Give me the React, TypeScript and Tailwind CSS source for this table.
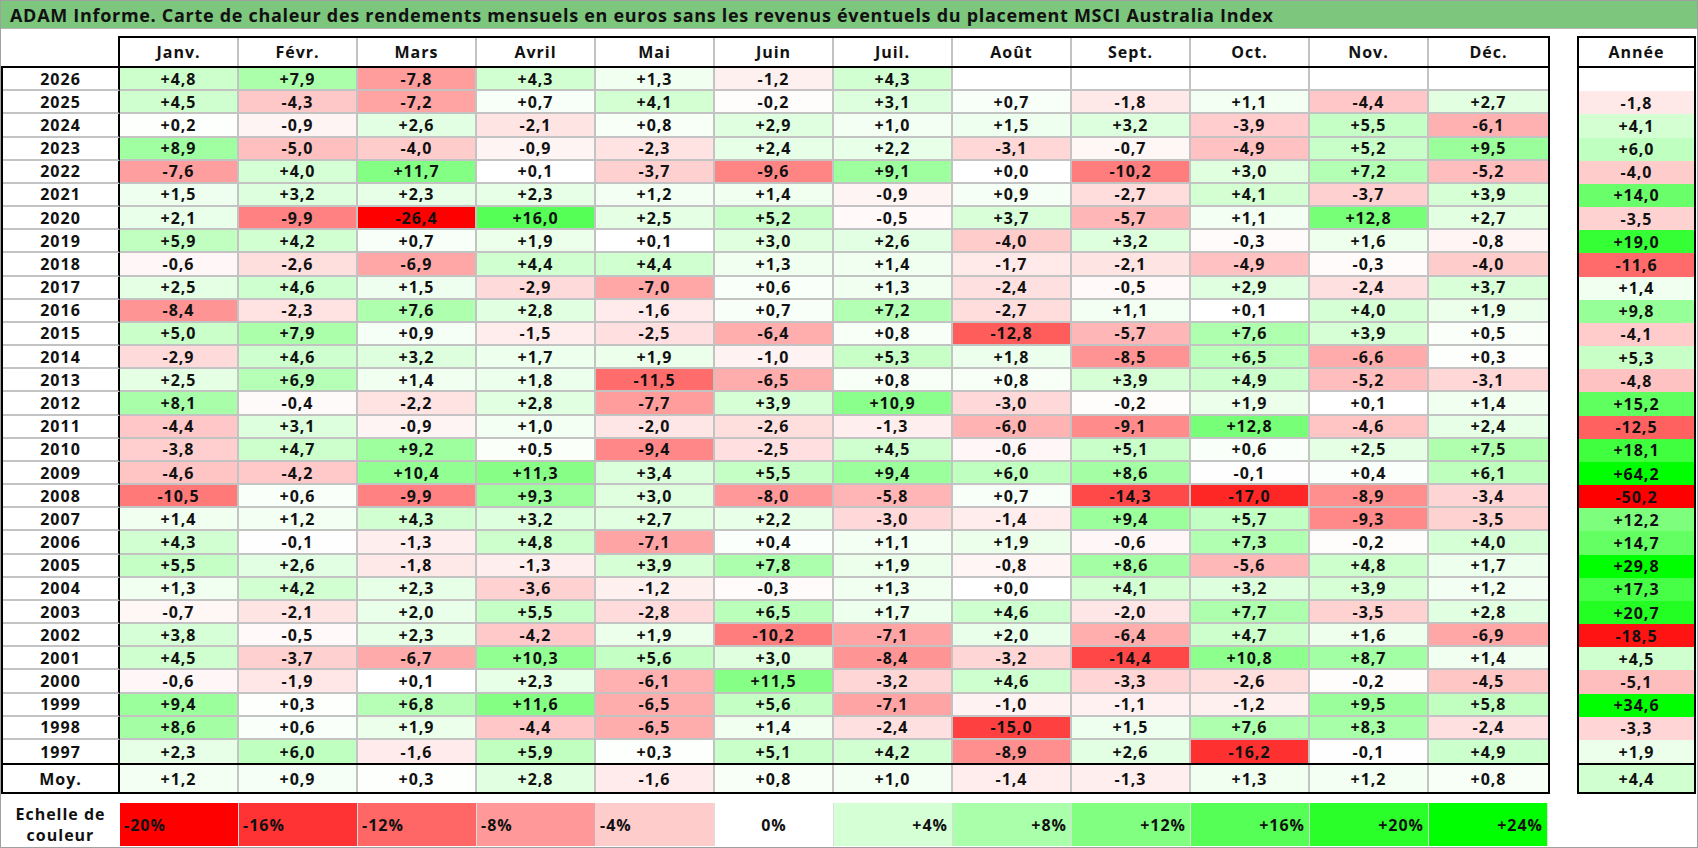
import clsx from "clsx"

const months = ["Janv.", "Févr.", "Mars", "Avril", "Mai", "Juin", "Juil.", "Août", "Sept.", "Oct.", "Nov.", "Déc."]

// année, 12 mois, total annuel
const rows: [string, string[], string][] = [
  ["2026", ["+4,8", "+7,9", "-7,8", "+4,3", "+1,3", "-1,2", "+4,3", "", "", "", "", ""], ""],
  ["2025", ["+4,5", "-4,3", "-7,2", "+0,7", "+4,1", "-0,2", "+3,1", "+0,7", "-1,8", "+1,1", "-4,4", "+2,7"], "-1,8"],
  ["2024", ["+0,2", "-0,9", "+2,6", "-2,1", "+0,8", "+2,9", "+1,0", "+1,5", "+3,2", "-3,9", "+5,5", "-6,1"], "+4,1"],
  ["2023", ["+8,9", "-5,0", "-4,0", "-0,9", "-2,3", "+2,4", "+2,2", "-3,1", "-0,7", "-4,9", "+5,2", "+9,5"], "+6,0"],
  ["2022", ["-7,6", "+4,0", "+11,7", "+0,1", "-3,7", "-9,6", "+9,1", "+0,0", "-10,2", "+3,0", "+7,2", "-5,2"], "-4,0"],
  ["2021", ["+1,5", "+3,2", "+2,3", "+2,3", "+1,2", "+1,4", "-0,9", "+0,9", "-2,7", "+4,1", "-3,7", "+3,9"], "+14,0"],
  ["2020", ["+2,1", "-9,9", "-26,4", "+16,0", "+2,5", "+5,2", "-0,5", "+3,7", "-5,7", "+1,1", "+12,8", "+2,7"], "-3,5"],
  ["2019", ["+5,9", "+4,2", "+0,7", "+1,9", "+0,1", "+3,0", "+2,6", "-4,0", "+3,2", "-0,3", "+1,6", "-0,8"], "+19,0"],
  ["2018", ["-0,6", "-2,6", "-6,9", "+4,4", "+4,4", "+1,3", "+1,4", "-1,7", "-2,1", "-4,9", "-0,3", "-4,0"], "-11,6"],
  ["2017", ["+2,5", "+4,6", "+1,5", "-2,9", "-7,0", "+0,6", "+1,3", "-2,4", "-0,5", "+2,9", "-2,4", "+3,7"], "+1,4"],
  ["2016", ["-8,4", "-2,3", "+7,6", "+2,8", "-1,6", "+0,7", "+7,2", "-2,7", "+1,1", "+0,1", "+4,0", "+1,9"], "+9,8"],
  ["2015", ["+5,0", "+7,9", "+0,9", "-1,5", "-2,5", "-6,4", "+0,8", "-12,8", "-5,7", "+7,6", "+3,9", "+0,5"], "-4,1"],
  ["2014", ["-2,9", "+4,6", "+3,2", "+1,7", "+1,9", "-1,0", "+5,3", "+1,8", "-8,5", "+6,5", "-6,6", "+0,3"], "+5,3"],
  ["2013", ["+2,5", "+6,9", "+1,4", "+1,8", "-11,5", "-6,5", "+0,8", "+0,8", "+3,9", "+4,9", "-5,2", "-3,1"], "-4,8"],
  ["2012", ["+8,1", "-0,4", "-2,2", "+2,8", "-7,7", "+3,9", "+10,9", "-3,0", "-0,2", "+1,9", "+0,1", "+1,4"], "+15,2"],
  ["2011", ["-4,4", "+3,1", "-0,9", "+1,0", "-2,0", "-2,6", "-1,3", "-6,0", "-9,1", "+12,8", "-4,6", "+2,4"], "-12,5"],
  ["2010", ["-3,8", "+4,7", "+9,2", "+0,5", "-9,4", "-2,5", "+4,5", "-0,6", "+5,1", "+0,6", "+2,5", "+7,5"], "+18,1"],
  ["2009", ["-4,6", "-4,2", "+10,4", "+11,3", "+3,4", "+5,5", "+9,4", "+6,0", "+8,6", "-0,1", "+0,4", "+6,1"], "+64,2"],
  ["2008", ["-10,5", "+0,6", "-9,9", "+9,3", "+3,0", "-8,0", "-5,8", "+0,7", "-14,3", "-17,0", "-8,9", "-3,4"], "-50,2"],
  ["2007", ["+1,4", "+1,2", "+4,3", "+3,2", "+2,7", "+2,2", "-3,0", "-1,4", "+9,4", "+5,7", "-9,3", "-3,5"], "+12,2"],
  ["2006", ["+4,3", "-0,1", "-1,3", "+4,8", "-7,1", "+0,4", "+1,1", "+1,9", "-0,6", "+7,3", "-0,2", "+4,0"], "+14,7"],
  ["2005", ["+5,5", "+2,6", "-1,8", "-1,3", "+3,9", "+7,8", "+1,9", "-0,8", "+8,6", "-5,6", "+4,8", "+1,7"], "+29,8"],
  ["2004", ["+1,3", "+4,2", "+2,3", "-3,6", "-1,2", "-0,3", "+1,3", "+0,0", "+4,1", "+3,2", "+3,9", "+1,2"], "+17,3"],
  ["2003", ["-0,7", "-2,1", "+2,0", "+5,5", "-2,8", "+6,5", "+1,7", "+4,6", "-2,0", "+7,7", "-3,5", "+2,8"], "+20,7"],
  ["2002", ["+3,8", "-0,5", "+2,3", "-4,2", "+1,9", "-10,2", "-7,1", "+2,0", "-6,4", "+4,7", "+1,6", "-6,9"], "-18,5"],
  ["2001", ["+4,5", "-3,7", "-6,7", "+10,3", "+5,6", "+3,0", "-8,4", "-3,2", "-14,4", "+10,8", "+8,7", "+1,4"], "+4,5"],
  ["2000", ["-0,6", "-1,9", "+0,1", "+2,3", "-6,1", "+11,5", "-3,2", "+4,6", "-3,3", "-2,6", "-0,2", "-4,5"], "-5,1"],
  ["1999", ["+9,4", "+0,3", "+6,8", "+11,6", "-6,5", "+5,6", "-7,1", "-1,0", "-1,1", "-1,2", "+9,5", "+5,8"], "+34,6"],
  ["1998", ["+8,6", "+0,6", "+1,9", "-4,4", "-6,5", "+1,4", "-2,4", "-15,0", "+1,5", "+7,6", "+8,3", "-2,4"], "-3,3"],
  ["1997", ["+2,3", "+6,0", "-1,6", "+5,9", "+0,3", "+5,1", "+4,2", "-8,9", "+2,6", "-16,2", "-0,1", "+4,9"], "+1,9"],
]

const average = ["+1,2", "+0,9", "+0,3", "+2,8", "-1,6", "+0,8", "+1,0", "-1,4", "-1,3", "+1,3", "+1,2", "+0,8"]
const averageYear = "+4,4"

const scale = [-20, -16, -12, -8, -4, 0, 4, 8, 12, 16, 20, 24]

// rouge jusqu'à -20 %, vert jusqu'à +24 %
function heat(v: number) {
  if (v < 0) {
    const c = Math.round(255 * (1 - Math.min(1, -v / 20)))
    return `rgb(255, ${c}, ${c})`
  }
  const c = Math.round(255 * (1 - Math.min(1, v / 24)))
  return `rgb(${c}, 255, ${c})`
}

function bg(s: string) {
  if (!s) return "#ffffff"
  return heat(parseFloat(s.replace(",", ".")))
}

function MonthCell({ value, last, bottom }: { value: string; last: boolean; bottom: boolean }) {
  return (
    <div
      className={clsx(
        "w-[119px] flex items-center justify-center border-[#c3c3c3]",
        !last && "border-r-2",
        !bottom && "border-b-2"
      )}
      style={{ backgroundColor: bg(value) }}
    >
      {value}
    </div>
  )
}

export default function App() {
  return (
    <div
      className="w-[1698px] h-[848px] border border-[#a0a0a0] bg-white text-[16px] leading-none font-bold text-[#111] tracking-[1px] overflow-hidden"
      style={{ fontFamily: '"Open Sans", "Liberation Sans", sans-serif' }}
    >
      {/* Titre */}
      <div className="h-[28px] bg-[#7dc67d] border-b border-[#b5b5b5] flex items-center pl-[9px] text-[18px] tracking-[0.7px]">
        ADAM Informe. Carte de chaleur des rendements mensuels en euros sans les revenus éventuels du placement MSCI Australia Index
      </div>

      <div className="flex mt-[7px]">
        {/* Tableau mensuel */}
        <div className="w-[1549px]">
          <div className="ml-[117px] h-[30px] flex border-2 border-b-0 border-black">
            {months.map((m, i) => (
              <div
                key={m}
                className={clsx("w-[119px] flex items-center justify-center border-[#c3c3c3]", i < 11 && "border-r-2")}
              >
                {m}
              </div>
            ))}
          </div>

          <div className="border-2 border-black h-[699px] flex flex-col">
            {rows.map(([year, vals], r) => (
              <div key={year} className="flex flex-1 min-h-0">
                <div
                  className={clsx(
                    "w-[117px] flex items-center justify-center border-r-2 border-r-black border-b-[#c3c3c3]",
                    r < rows.length - 1 && "border-b-2"
                  )}
                >
                  {year}
                </div>
                {vals.map((v, i) => (
                  <MonthCell key={i} value={v} last={i === 11} bottom={r === rows.length - 1} />
                ))}
              </div>
            ))}
          </div>

          <div className="h-[29px] flex border-2 border-t-0 border-black">
            <div className="w-[117px] flex items-center justify-center border-r-2 border-black">Moy.</div>
            {average.map((v, i) => (
              <MonthCell key={i} value={v} last={i === 11} bottom />
            ))}
          </div>
        </div>

        {/* Colonne annuelle */}
        <div className="ml-[27px] w-[119px]">
          <div className="h-[30px] border-2 border-b-0 border-black flex items-center justify-center">Année</div>
          <div className="border-2 border-black h-[699px] flex flex-col">
            {rows.map(([year, , total]) => (
              <div
                key={year}
                className="flex-1 min-h-0 flex items-center justify-center"
                style={{ backgroundColor: bg(total) }}
              >
                {total}
              </div>
            ))}
          </div>
          <div
            className="h-[29px] border-2 border-t-0 border-black flex items-center justify-center"
            style={{ backgroundColor: bg(averageYear) }}
          >
            {averageYear}
          </div>
        </div>
      </div>

      {/* Echelle de couleur */}
      <div className="flex mt-[9px] h-[43px]">
        <div className="w-[119px] flex flex-col items-center justify-center leading-[21px]">
          <span>Echelle de</span>
          <span>couleur</span>
        </div>
        {scale.map((s) => (
          <div
            key={s}
            className={clsx(
              "w-[119px] flex items-center border-r border-[#dcdcdc] px-[4px]",
              s < 0 && "justify-start",
              s === 0 && "justify-center",
              s > 0 && "justify-end"
            )}
            style={{ backgroundColor: heat(s) }}
          >
            {s > 0 ? `+${s}%` : `${s}%`}
          </div>
        ))}
      </div>
    </div>
  )
}
